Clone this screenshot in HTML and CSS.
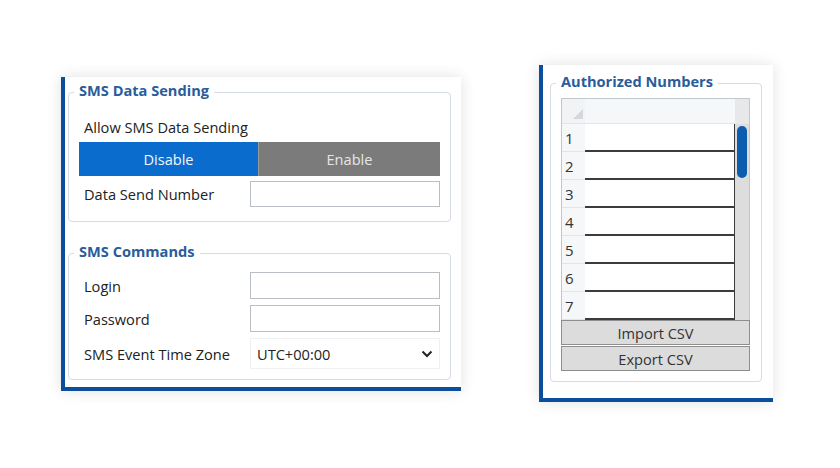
FILE: index.html
```html
<!DOCTYPE html>
<html>
<head>
<meta charset="utf-8">
<link rel="stylesheet" href="styles.css">
</head>
<body>
<div class="stage">
  <div class="card card-left">
    <fieldset class="group g1">
      <legend>SMS Data Sending</legend>
      <div class="allow">Allow SMS Data Sending</div>
      <div class="toggle">
        <div class="tbtn on">Disable</div>
        <div class="tbtn off">Enable</div>
      </div>
      <div class="row r-send">
        <div class="lbl">Data Send Number</div>
        <div class="inp"></div>
      </div>
    </fieldset>
    <fieldset class="group g2">
      <legend>SMS Commands</legend>
      <div class="form">
        <div class="lbl">Login</div>
        <div class="inp"></div>
        <div class="lbl">Password</div>
        <div class="inp"></div>
        <div class="lbl">SMS Event Time Zone</div>
        <div class="sel"><span>UTC+00:00</span>
          <svg width="12" height="8" viewBox="0 0 12 8"><path d="M1.5 1.5 L6 6 L10.5 1.5" fill="none" stroke="#222" stroke-width="2"/></svg>
        </div>
      </div>
    </fieldset>
  </div>

  <div class="card card-right">
    <fieldset class="group g3">
      <legend>Authorized Numbers</legend>
      <div class="grid">
        <div class="corner"><svg width="10" height="10" viewBox="0 0 10 10"><path d="M10 0 L10 10 L0 10 Z" fill="#d4d8dc"/></svg></div>
        <div class="colhead"></div>
        <div class="sbhead"></div>
        <div class="rh">1</div><div class="cell"></div>
        <div class="sb"><div class="thumb"></div></div>
        <div class="rh">2</div><div class="cell"></div>
        <div class="rh">3</div><div class="cell"></div>
        <div class="rh">4</div><div class="cell"></div>
        <div class="rh">5</div><div class="cell"></div>
        <div class="rh">6</div><div class="cell"></div>
        <div class="rh">7</div><div class="cell"></div>
      </div>
      <div class="btn">Import CSV</div>
      <div class="btn">Export CSV</div>
    </fieldset>
  </div>
</div>
</body>
</html>
```
FILE: styles.css
```css
* { box-sizing: border-box; }
html, body { margin: 0; padding: 0; background: #fff; }
body {
  width: 840px; height: 468px; overflow: hidden;
  font-family: "Open Sans", "Noto Sans", sans-serif;
  font-size: 14.6px; color: #222;
}
.stage {
  display: flex; align-items: flex-start;
  padding-left: 61px; gap: 78px;
}
.card {
  background: #fff;
  border-left: 4px solid #0b4e9b;
  border-bottom: 4px solid #0b4e9b;
  box-shadow: 0 0 14px rgba(0,0,0,0.12);
}
.card-left {
  margin-top: 77px; width: 400px;
  padding: 6px 10px 7px 3px;
}
.card-right {
  margin-top: 65px; width: 234px;
  padding: 9px 11px 16px 7px;
}
.group {
  margin: 0; min-width: 0;
  border: 1px solid #d6dce3; border-radius: 4px;
}
.group legend {
  font-weight: 700; color: #2a5c9c; font-size: 14.6px;
  line-height: 15px; height: 18px;
  padding: 0 5px 3px 5px; margin-left: -5px;
}
.g1 { padding: 12px 10px 14px 10px; }
.allow { height: 28px; line-height: 28px; padding-left: 5px; }
.toggle { display: flex; height: 34px; margin-top: 1px; }
.tbtn {
  flex: 1; display: flex; align-items: center; justify-content: center;
  font-size: 14.6px; font-weight: 500;
}
.tbtn.on { background: #0a6ccd; color: #f2f6fb; flex: 0 0 179px; }
.tbtn.off { background: #7b7b7b; color: #e6e6e6; border-left: 1px solid #9a9a9a; }
.row { display: grid; grid-template-columns: 171px 1fr; align-items: center; }
.r-send { margin-top: 5px; }
.lbl { padding-left: 5px; }
.inp { height: 26px; border: 1px solid #b9bec4; background: #fff; }
.g2 { margin-top: 22px; padding: 10px 10px 10px 10px; }
.form {
  display: grid; grid-template-columns: 171px 1fr;
  grid-template-rows: 27px 27px 31px; row-gap: 6px; align-items: center;
}
.form .inp { height: 27px; }
.sel {
  height: 31px; border: 1px solid #eef0f2; display: flex; align-items: center;
  justify-content: space-between; padding: 0 6px 0 6px;
}
.g3 { padding: 6px 11px 10px 10px; }
.grid {
  display: grid; grid-template-columns: 23px 150px 14px;
  grid-template-rows: 25px repeat(7, 28px);
  border: 1px solid #bfc7cf; border-bottom: none;
}
.corner {
  background: #f1f3f5; display: flex; align-items: flex-end; justify-content: flex-end;
  padding: 0 2px 4px 0; border-bottom: 1px solid #e1e5e9;
}
.colhead { background: #f5f7f9; border-bottom: 1px solid #e1e5e9; }
.sbhead { background: #e6e8ea; }
.rh {
  background: #f6f7f9; border-bottom: 1px solid #e2e5e8;
  padding-left: 3px; display: flex; align-items: center; font-size: 15px; color: #333;
}
.cell { background: #fff; border-bottom: 2px solid #3b3b3b; border-right: 1.5px solid #3b3b3b; }
.sb { grid-column: 3; grid-row: 2 / span 7; background: #dddddd; padding: 2px 0 0 2px; }
.thumb { width: 10px; height: 52px; border-radius: 5px; background: #0c5dae; }
.btn {
  height: 25px; background: #dcdcdc; border: 1px solid #8d8d8d;
  display: flex; align-items: center; justify-content: center;
  font-size: 14.6px; color: #333;
}
.btn + .btn { margin-top: 1px; }
```
